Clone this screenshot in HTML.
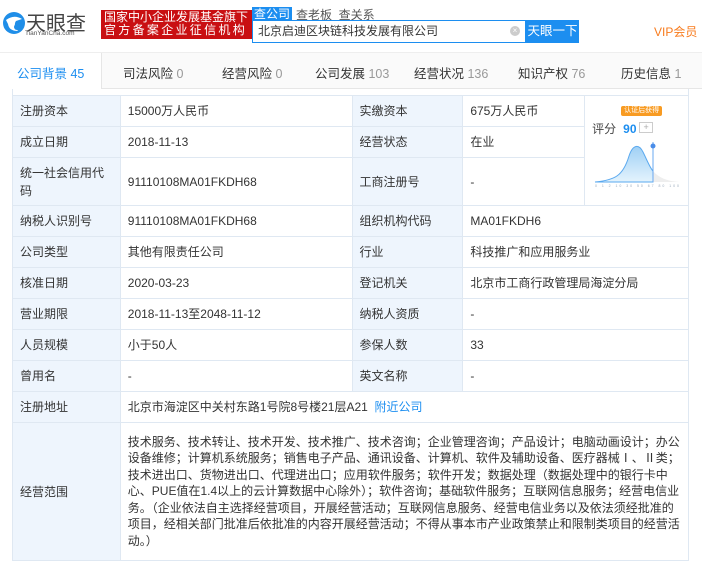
<!DOCTYPE html>
<html><head><meta charset="utf-8"><style>
*{margin:0;padding:0;box-sizing:border-box}
body{width:702px;height:570px;overflow:hidden;background:#fff;font-family:"Liberation Sans","Noto Sans CJK SC",sans-serif;color:#333;position:relative}
.abs{position:absolute}
table{position:absolute;left:12px;top:95px;width:677px;border-collapse:collapse;font-size:12px}
td{border:1px solid #dfe8f2;padding:0 7px;vertical-align:middle;line-height:18px}
td.l{background:#eef5fd;color:#333}
</style></head><body>
<svg class="abs" style="left:2px;top:11px" width="24" height="24" viewBox="0 0 24 24"><circle cx="12" cy="12" r="11" fill="#1f8ee8"/><path d="M4 9 Q12 3 20 8 L14 10 Q11 14 16 20 Q7 20 6 13Z" fill="#fff"/><circle cx="15" cy="16" r="3" fill="#1f8ee8"/></svg>
<div class="abs" style="left:26px;top:7px;font-size:20px;color:#444">天眼查</div>
<div class="abs" style="left:25px;top:30px;font-size:6.5px;color:#555">TianYanCha.com</div>
<div class="abs" style="left:101px;top:10px;width:151px;height:29px;background:#c90f12;color:#fff;font-size:12px;line-height:13px;padding:1px 3px;white-space:nowrap;overflow:hidden">国家中小企业发展基金旗下<br><span style="letter-spacing:2.3px">官方备案企业征信机构</span></div>
<div class="abs" style="left:252px;top:7px;width:40px;height:14px;background:#1c8ef0;color:#fff;font-size:12px;line-height:14px;text-align:center">查公司</div>
<div class="abs" style="left:296px;top:6px;font-size:12px;color:#555">查老板 &nbsp;查关系</div>
<div class="abs" style="left:252px;top:20px;width:274px;height:23px;border:1px solid #1c8ef0;background:#fff;font-size:12px;line-height:21px;padding-left:5px;color:#333">北京启迪区块链科技发展有限公司</div>
<div class="abs" style="left:510px;top:26px;width:10px;height:10px;border-radius:50%;background:#ccc;color:#fff;font-size:8px;line-height:10px;text-align:center">×</div>
<div class="abs" style="left:526px;top:20px;height:23px;background:#1c8ef0;color:#fff;font-size:12.5px;line-height:23px;text-align:center;width:53px;white-space:nowrap">天眼一下</div>
<div class="abs" style="left:654px;top:23px;font-size:12px;color:#f87b1d">VIP会员</div>
<div class="abs" style="left:0;top:52px;width:702px;height:37px;background:#fafafa;border-top:1px solid #eee;border-bottom:1px solid #e6e6e6"></div>
<div class="abs" style="left:0;top:53px;width:102px;height:36px;background:#fff;border-right:1px solid #e6e6e6"></div>
<div class="abs" style="top:63px;left:0;width:702px;font-size:12.5px;color:#333;white-space:nowrap">
<span class="abs" style="left:17px;color:#1c8ef0">公司背景 45</span>
<span class="abs" style="left:123px">司法风险 <span style="color:#999">0</span></span>
<span class="abs" style="left:222px">经营风险 <span style="color:#999">0</span></span>
<span class="abs" style="left:315px">公司发展 <span style="color:#999">103</span></span>
<span class="abs" style="left:414px">经营状况 <span style="color:#999">136</span></span>
<span class="abs" style="left:518px">知识产权 <span style="color:#999">76</span></span>
<span class="abs" style="left:621px">历史信息 <span style="color:#999">1</span></span>
</div>
<div class="abs" style="left:12px;top:89px;width:677px;height:6px;border-left:1px solid #dfe8f2;border-right:1px solid #dfe8f2"></div>
<table>
<colgroup><col style="width:108px"><col style="width:232px"><col style="width:111px"><col style="width:122px"><col style="width:104px"></colgroup>
<tr style="height:31px"><td class="l">注册资本</td><td>15000万人民币</td><td class="l">实缴资本</td><td>675万人民币</td>
<td rowspan="3" style="padding:0;position:relative">
<div class="abs" style="left:36px;top:10px;background:#f89b22;color:#fff;font-size:7px;line-height:10px;padding:0 3px;border-radius:2px">认证后获得</div>
<div class="abs" style="left:7px;top:24px;font-size:12px;color:#444">评分</div>
<div class="abs" style="left:38px;top:24px;font-size:12px;font-weight:bold;color:#1c8ef0">90</div>
<div class="abs" style="left:54px;top:26px;width:14px;height:11px;border:1px solid #ccc;font-size:9px;color:#aaa;text-align:center;line-height:9px">+</div>
<svg class="abs" style="left:8px;top:40px" width="88" height="52" viewBox="0 0 88 52"><defs><linearGradient id="g" x1="0" y1="0" x2="0" y2="1"><stop offset="0" stop-color="#9fd0f5"/><stop offset="1" stop-color="#e4f3fd"/></linearGradient></defs><path d="M2 46 C22 44 30 40 36 20 C40 8 46 8 50 16 C54 24 57 32 60 35 L60 46Z" fill="url(#g)" stroke="#5aa9ef"/><path d="M60 35 C66 42 74 45 86 46 L60 46Z" fill="#eee"/><line x1="60" y1="6" x2="60" y2="46" stroke="#6aa8f0"/><circle cx="60" cy="10" r="2.5" fill="#4a8de8"/><text x="2" y="51" font-size="3.5" fill="#9ab" font-family="Liberation Sans" textLength="84">0 1 2 10 30 50 67 80 100</text></svg>
</td></tr>
<tr style="height:31px"><td class="l">成立日期</td><td>2018-11-13</td><td class="l">经营状态</td><td>在业</td></tr>
<tr style="height:48px"><td class="l">统一社会信用代码</td><td>91110108MA01FKDH68</td><td class="l">工商注册号</td><td>-</td></tr>
<tr style="height:31px"><td class="l">纳税人识别号</td><td>91110108MA01FKDH68</td><td class="l">组织机构代码</td><td colspan="2">MA01FKDH6</td></tr>
<tr style="height:31px"><td class="l">公司类型</td><td>其他有限责任公司</td><td class="l">行业</td><td colspan="2">科技推广和应用服务业</td></tr>
<tr style="height:31px"><td class="l">核准日期</td><td>2020-03-23</td><td class="l">登记机关</td><td colspan="2">北京市工商行政管理局海淀分局</td></tr>
<tr style="height:31px"><td class="l">营业期限</td><td>2018-11-13至2048-11-12</td><td class="l">纳税人资质</td><td colspan="2">-</td></tr>
<tr style="height:31px"><td class="l">人员规模</td><td>小于50人</td><td class="l">参保人数</td><td colspan="2">33</td></tr>
<tr style="height:31px"><td class="l">曾用名</td><td>-</td><td class="l">英文名称</td><td colspan="2">-</td></tr>
<tr style="height:31px"><td class="l">注册地址</td><td colspan="4">北京市海淀区中关村东路1号院8号楼21层A21 &nbsp;<span style="color:#1c8ef0">附近公司</span></td></tr>
<tr style="height:138px"><td class="l">经营范围</td><td colspan="4" style="padding-top:6px;padding-bottom:6px;line-height:16.5px">技术服务、技术转让、技术开发、技术推广、技术咨询；企业管理咨询；产品设计；电脑动画设计；办公设备维修；计算机系统服务；销售电子产品、通讯设备、计算机、软件及辅助设备、医疗器械Ⅰ、Ⅱ类；技术进出口、货物进出口、代理进出口；应用软件服务；软件开发；数据处理（数据处理中的银行卡中心、PUE值在1.4以上的云计算数据中心除外）；软件咨询；基础软件服务；互联网信息服务；经营电信业务。（企业依法自主选择经营项目，开展经营活动；互联网信息服务、经营电信业务以及依法须经批准的项目，经相关部门批准后依批准的内容开展经营活动；不得从事本市产业政策禁止和限制类项目的经营活动。）</td></tr>
</table>
</body></html>
